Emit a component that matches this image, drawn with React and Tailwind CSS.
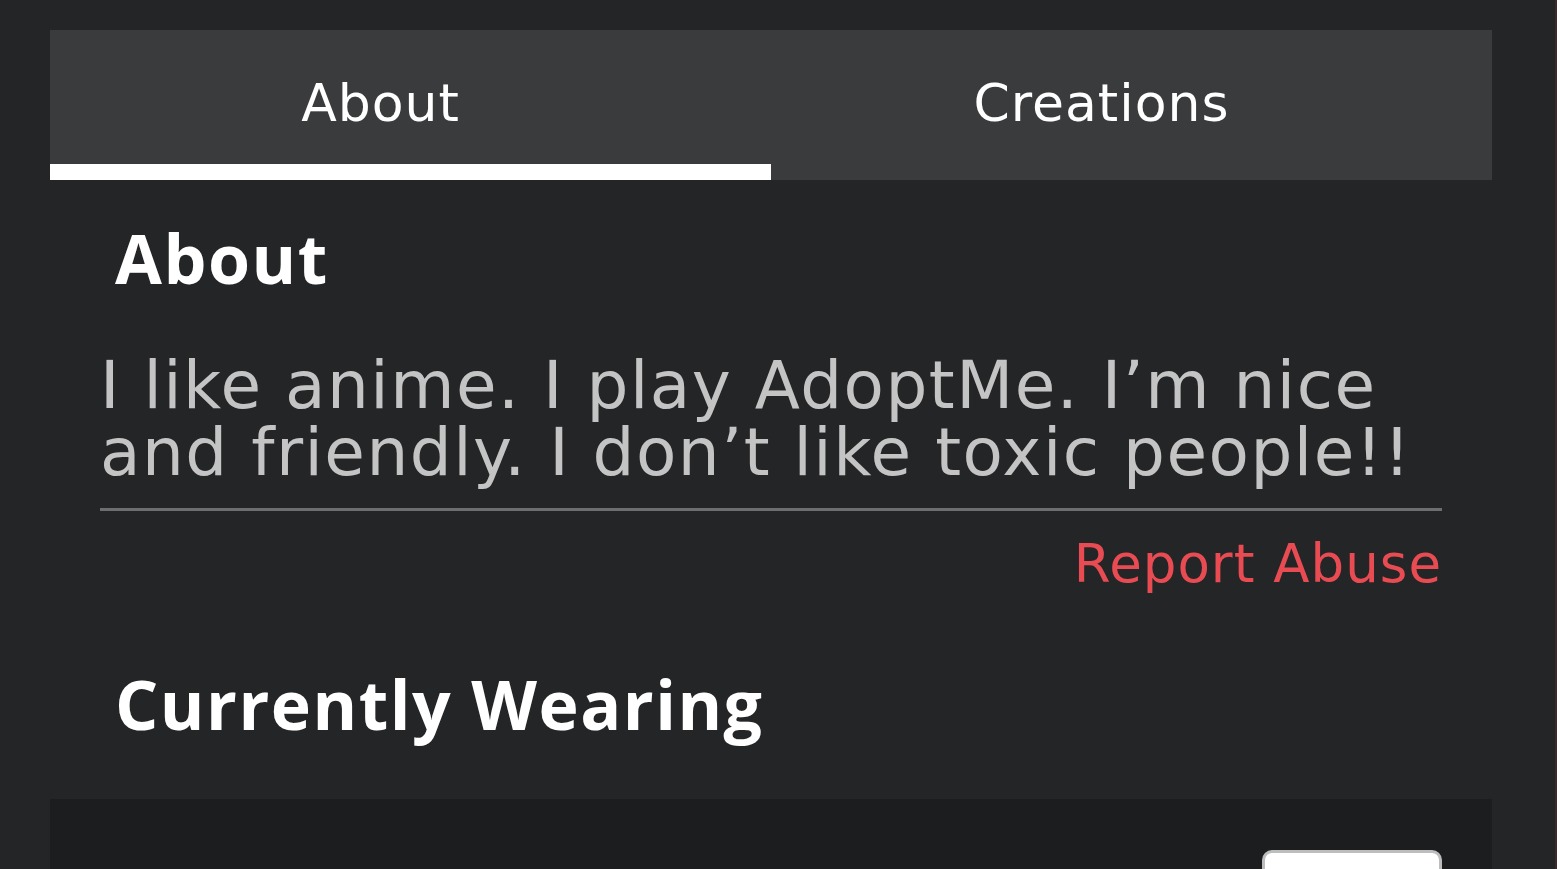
export default function App() {
  return (
    <div className="w-[1557px] h-[869px] overflow-hidden bg-[#232527] flex" style={{ fontFamily: "'DejaVu Sans', 'Open Sans', sans-serif" }}>
      <div className="flex-1 pt-[30px] pl-[50px] pr-[63px]">
        <div className="grid grid-cols-2 h-[150px] bg-[#393b3d]">
          <div className="flex flex-col">
            <div className="flex-1 flex items-center justify-center pr-[60px] pt-[12px] text-[52px] tracking-[1px] text-white">About</div>
            <div className="h-[16px] bg-white" />
          </div>
          <div className="flex items-center justify-center pr-[60px] pt-[12px] pb-[16px] text-[52px] tracking-[1px] text-white">Creations</div>
        </div>
        <div className="pl-[50px] pr-[50px]">
          <h2 className="pl-[15px] pt-[38px] text-[68px] font-bold tracking-[1.5px] text-white leading-[80px]" style={{ fontFamily: "'Open Sans', sans-serif" }}>About</h2>
          <p className="mt-[54px] text-[66px] leading-[67px] tracking-[1.5px] text-[#c4c4c4]">
            I like anime. I play AdoptMe. I’m nice and friendly. I don’t like toxic people!!
          </p>
          <div className="mt-[22px] h-[3px] bg-[#6d6e70]" />
          <div className="mt-[23px] flex justify-end">
            <span className="text-[53px] leading-[60px] tracking-[1px] text-[#e94b52]">Report Abuse</span>
          </div>
          <h2 className="pl-[15px] mt-[70px] text-[68px] font-bold tracking-[1.5px] text-white leading-[80px]" style={{ fontFamily: "'Open Sans', sans-serif" }}>Currently Wearing</h2>
        </div>
        <div className="mt-[55px] h-[200px] bg-[#1c1d1f] flex justify-end pr-[50px] pt-[51px]">
          <div className="w-[180px] h-[100px] bg-white rounded-[10px] border-[3px] border-[#bdbdbd]" />
        </div>
      </div>
      <div className="w-[2px] bg-[#3a2a2c]" />
    </div>
  );
}
